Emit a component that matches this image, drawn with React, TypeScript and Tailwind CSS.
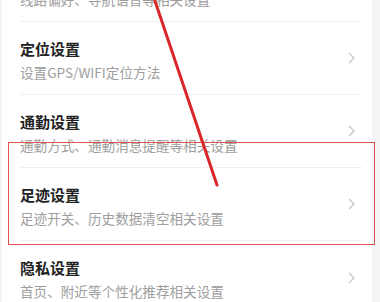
import React from "react";

type Item = { title: string; desc: string };

const items: Item[] = [
  { title: "导航设置", desc: "线路偏好、导航语音等相关设置" },
  { title: "定位设置", desc: "设置GPS/WIFI定位方法" },
  { title: "通勤设置", desc: "通勤方式、通勤消息提醒等相关设置" },
  { title: "足迹设置", desc: "足迹开关、历史数据清空相关设置" },
  { title: "隐私设置", desc: "首页、附近等个性化推荐相关设置" },
];

function Chevron() {
  return (
    <svg width="8" height="12" viewBox="0 0 8 12" fill="none" className="shrink-0">
      <path d="M1.5 1.5 6 6l-4.5 4.5" stroke="#c4c4c4" strokeWidth="1.3" strokeLinecap="round" strokeLinejoin="round" />
    </svg>
  );
}

function Row({ item, last }: { item: Item; last: boolean }) {
  return (
    <div className="ml-[18px] mr-[10px]">
      <div className={`flex h-[73px] items-center pr-[6px] ${last ? "" : "border-b border-[#efefef]"}`}>
        <div className="flex-1 pt-[4px]">
          <div className="text-[15px] font-bold leading-[20px] text-[#222]">{item.title}</div>
          <div className="mt-[3px] text-[13.6px] leading-[20px] text-[#9e9e9e]">{item.desc}</div>
        </div>
        <Chevron />
      </div>
    </div>
  );
}

export default function App() {
  return (
    <div
      className="relative h-[302px] w-[380px] overflow-hidden bg-[#f3f4f6]"
      style={{ fontFamily: '"Noto Sans CJK SC", "Noto Sans", sans-serif' }}
    >
      <div className="-mt-[51px] ml-[2px] w-[370px] bg-white">
        {items.map((it, i) => (
          <Row key={it.title} item={it} last={i === items.length - 1} />
        ))}
      </div>

      <div className="pointer-events-none absolute left-[8px] top-[142px] h-[103px] w-[367px] border-[1.5px] border-[#d9534f]" />

      <svg className="pointer-events-none absolute left-0 top-0" width="380" height="302">
        <line x1="154" y1="-2" x2="217" y2="185" stroke="#d8262a" strokeWidth="3" strokeLinecap="round" />
      </svg>
    </div>
  );
}
